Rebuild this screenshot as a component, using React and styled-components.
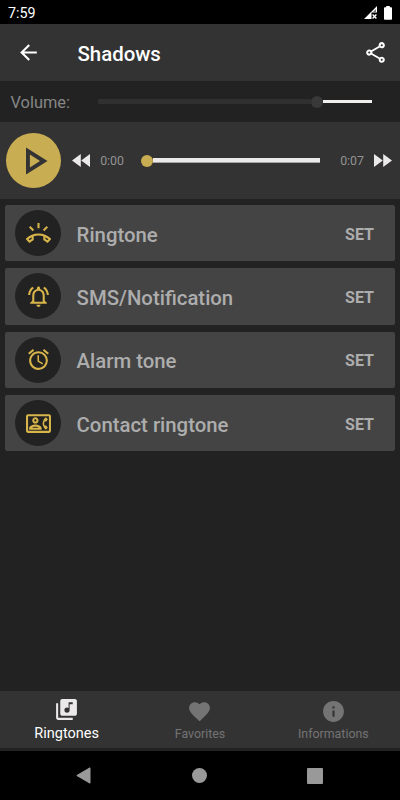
import React from 'react'
import styled, { createGlobalStyle } from 'styled-components'
import {
  MdAlarm,
  MdArrowBack,
  MdFavorite,
  MdInfo,
  MdLibraryMusic,
  MdOutlineContactPhone,
  MdOutlineNotificationsActive,
  MdOutlineRingVolume,
  MdOutlineShare,
} from 'react-icons/md'

const Color = {
  BASE: '#222222',
  BAR: '#333333',
  CARD: '#444444',
  GOLD: '#c9ad53',
  ICON: '#d8b54a',
  LIGHT: '#ebe9e9',
  TEXT: '#adadad',
  WEAK: '#747474',
}

const actions = [
  { name: 'Ringtone', icon: MdOutlineRingVolume },
  { name: 'SMS/Notification', icon: MdOutlineNotificationsActive },
  { name: 'Alarm tone', icon: MdAlarm },
  { name: 'Contact ringtone', icon: MdOutlineContactPhone },
]

const tabs = [
  { name: 'Ringtones', icon: MdLibraryMusic, active: true },
  { name: 'Favorites', icon: MdFavorite },
  { name: 'Informations', icon: MdInfo },
]

const App = () => {
  return (
    <>
      <GlobalStyle />
      <Screen>
        <StatusBar>
          <span>7:59</span>
          <StatusIcons>
            <svg width="14" height="14" viewBox="0 0 14 14">
              <path d="M0 13 13 0v6.5H7.5V13z" fill="#fff" />
              <path d="M12 3v3.5H8.5z" fill="#777" />
              <path d="m8.6 8.6 3.8 3.8m0-3.8-3.8 3.8" stroke="#fff" strokeWidth="1.4" />
            </svg>
            <svg width="8" height="14" viewBox="0 0 8 14">
              <rect x="2.2" width="3.6" height="3" fill="#fff" />
              <rect y="1.2" width="8" height="12.6" rx=".8" fill="#fff" />
            </svg>
          </StatusIcons>
        </StatusBar>
        <Header>
          <IconButton aria-label="Back"><MdArrowBack size={25} /></IconButton>
          <Title>Shadows</Title>
          <IconButton aria-label="Share"><MdOutlineShare size={25} /></IconButton>
        </Header>
        <Volume>
          <VolumeLabel>Volume:</VolumeLabel>
          <VolumeTrack>
            <VolumeLevel />
            <VolumeThumb />
            <VolumeRest />
          </VolumeTrack>
        </Volume>
        <Player>
          <PlayButton aria-label="Play">
            <svg width="22" height="28" viewBox="0 0 22 28">
              <path d="M0 .5 21.5 14 0 27.5zM3.9 7.5v13L14 14z" fill={Color.BAR} fillRule="evenodd" />
            </svg>
          </PlayButton>
          <Seek aria-label="Rewind">
            <svg width="18" height="13" viewBox="0 0 18 13">
              <path d="M8.8 0v13L0 6.5zM18 0v13L9.2 6.5z" fill={Color.LIGHT} />
            </svg>
          </Seek>
          <Time>0:00</Time>
          <Progress>
            <ProgressThumb />
            <ProgressLine />
          </Progress>
          <Time>0:07</Time>
          <Seek aria-label="Forward">
            <svg width="18" height="13" viewBox="0 0 18 13">
              <path d="M0 0v13L8.8 6.5zM9.2 0v13L18 6.5z" fill={Color.LIGHT} />
            </svg>
          </Seek>
        </Player>
        <List>
          {actions.map(({ name, icon: Icon }) => (
            <Card key={name}>
              <Badge><Icon size={25} /></Badge>
              <CardName>{name}</CardName>
              <SetButton>SET</SetButton>
            </Card>
          ))}
        </List>
        <TabBar>
          {tabs.map(({ name, icon: Icon, active }) => (
            <Tab key={name} $active={active}>
              <Icon size={25} />
              <TabName $active={active}>{name}</TabName>
            </Tab>
          ))}
        </TabBar>
        <SystemBar>
          <svg width="15" height="17" viewBox="0 0 15 17">
            <path d="M14 .8v15.4L.8 8.5z" fill="#999" stroke="#999" strokeLinejoin="round" />
          </svg>
          <HomeDot />
          <RecentSquare />
        </SystemBar>
      </Screen>
    </>
  )
}

const GlobalStyle = createGlobalStyle`
  * {
    box-sizing: border-box;
  }
  body {
    margin: 0;
    background: ${Color.BASE};
    font-family: Roboto, sans-serif;
  }
  button {
    padding: 0;
    border: 0;
    background: none;
    color: inherit;
    font: inherit;
  }
  svg {
    display: block;
    flex: none;
  }
`;

const Screen = styled.div`
  display: flex;
  flex-direction: column;
  width: 400px;
  height: 800px;
  background: ${Color.BASE};
  overflow: hidden;
`;

const StatusBar = styled.div`
  display: flex;
  justify-content: space-between;
  align-items: center;
  height: 24px;
  padding: 1px 8px 0;
  background: #000;
  color: #fff;
  font-size: 14.3px;
`;

const StatusIcons = styled.div`
  display: flex;
  gap: 6px;
`;

const Header = styled.header`
  display: flex;
  align-items: center;
  height: 57px;
  padding: 0 12px 0 16px;
  background: ${Color.BAR};
  color: #fff;
`;

const IconButton = styled.button`
  display: flex;
`;

const Title = styled.h1`
  flex: 1;
  margin: 3px 0 0 36.5px;
  font-size: 20.4px;
  font-weight: 500;
  line-height: 24px;
`;

const Volume = styled.div`
  display: flex;
  align-items: center;
  height: 41px;
  padding: 0 28px 0 10.5px;
`;

const VolumeLabel = styled.span`
  width: 87.5px;
  padding-top: 2px;
  color: #868686;
  font-size: 16.4px;
`;

const VolumeTrack = styled.div`
  display: flex;
  flex: 1;
  align-items: center;
`;

const VolumeLevel = styled.div`
  flex: 1;
  height: 5px;
  background: #303030;
`;

const VolumeThumb = styled.div`
  width: 12px;
  height: 12px;
  border-radius: 50%;
  background: #393939;
`;

const VolumeRest = styled.div`
  width: 49px;
  height: 3px;
  background: #f0efed;
`;

const Player = styled.section`
  display: flex;
  align-items: center;
  height: 77px;
  padding: 0 8px 0 6px;
  background: ${Color.BAR};
`;

const PlayButton = styled.button`
  display: flex;
  justify-content: center;
  align-items: center;
  width: 55px;
  height: 55px;
  margin-right: 11px;
  padding-left: 6px;
  border-radius: 50%;
  background: ${Color.GOLD};
`;

const Seek = styled.button`
  display: flex;
`;

const Time = styled.span`
  width: 44px;
  padding-top: 1px;
  color: #929292;
  font-size: 12.3px;
  text-align: center;
`;

const Progress = styled.div`
  display: flex;
  flex: 1;
  align-items: center;
  padding: 0 10px 0 7px;
`;

const ProgressThumb = styled.div`
  width: 12px;
  height: 12px;
  border-radius: 50%;
  background: ${Color.GOLD};
`;

const ProgressLine = styled.div`
  flex: 1;
  height: 5px;
  background: ${Color.LIGHT};
  border-bottom: 1px solid #a5a5a5;
`;

const List = styled.main`
  display: flex;
  flex: 1;
  flex-direction: column;
  gap: 7px;
  padding: 6px 5px 0;
`;

const Card = styled.div`
  display: flex;
  align-items: center;
  height: 56.3px;
  padding: 0 21px 0 10.4px;
  border-radius: 2px;
  background: ${Color.CARD};
  color: ${Color.TEXT};
`;

const Badge = styled.div`
  display: flex;
  justify-content: center;
  align-items: center;
  width: 46px;
  height: 46px;
  border-radius: 50%;
  background: ${Color.BASE};
  color: ${Color.ICON};
`;

const CardName = styled.span`
  flex: 1;
  padding: 3px 0 0 15.2px;
  font-size: 20.35px;
  font-weight: 500;
`;

const SetButton = styled.button`
  padding-top: 2px;
  font-size: 16px;
  font-weight: 700;
`;

const TabBar = styled.nav`
  display: grid;
  grid-template-columns: repeat(3, 1fr);
  height: 57px;
  margin-bottom: 3px;
  background: ${Color.BAR};
`;

const Tab = styled.button`
  display: flex;
  flex-direction: column;
  align-items: center;
  padding-top: ${props => props.$active ? 6 : 8}px;
  color: ${props => props.$active ? Color.LIGHT : Color.WEAK};
`;

const TabName = styled.span`
  margin-top: ${props => props.$active ? 2 : 0}px;
  color: ${props => props.$active ? '#fff' : Color.WEAK};
  font-size: ${props => props.$active ? 14.5 : 12.4}px;
  line-height: 20px;
`;

const SystemBar = styled.div`
  display: flex;
  justify-content: space-between;
  align-items: center;
  height: 49px;
  padding: 0 77px 0 76px;
  background: #000;
`;

const HomeDot = styled.div`
  width: 15px;
  height: 15px;
  border-radius: 50%;
  background: #999;
`;

const RecentSquare = styled.div`
  width: 16px;
  height: 16px;
  border-radius: 1px;
  background: #999;
`;

export default App
